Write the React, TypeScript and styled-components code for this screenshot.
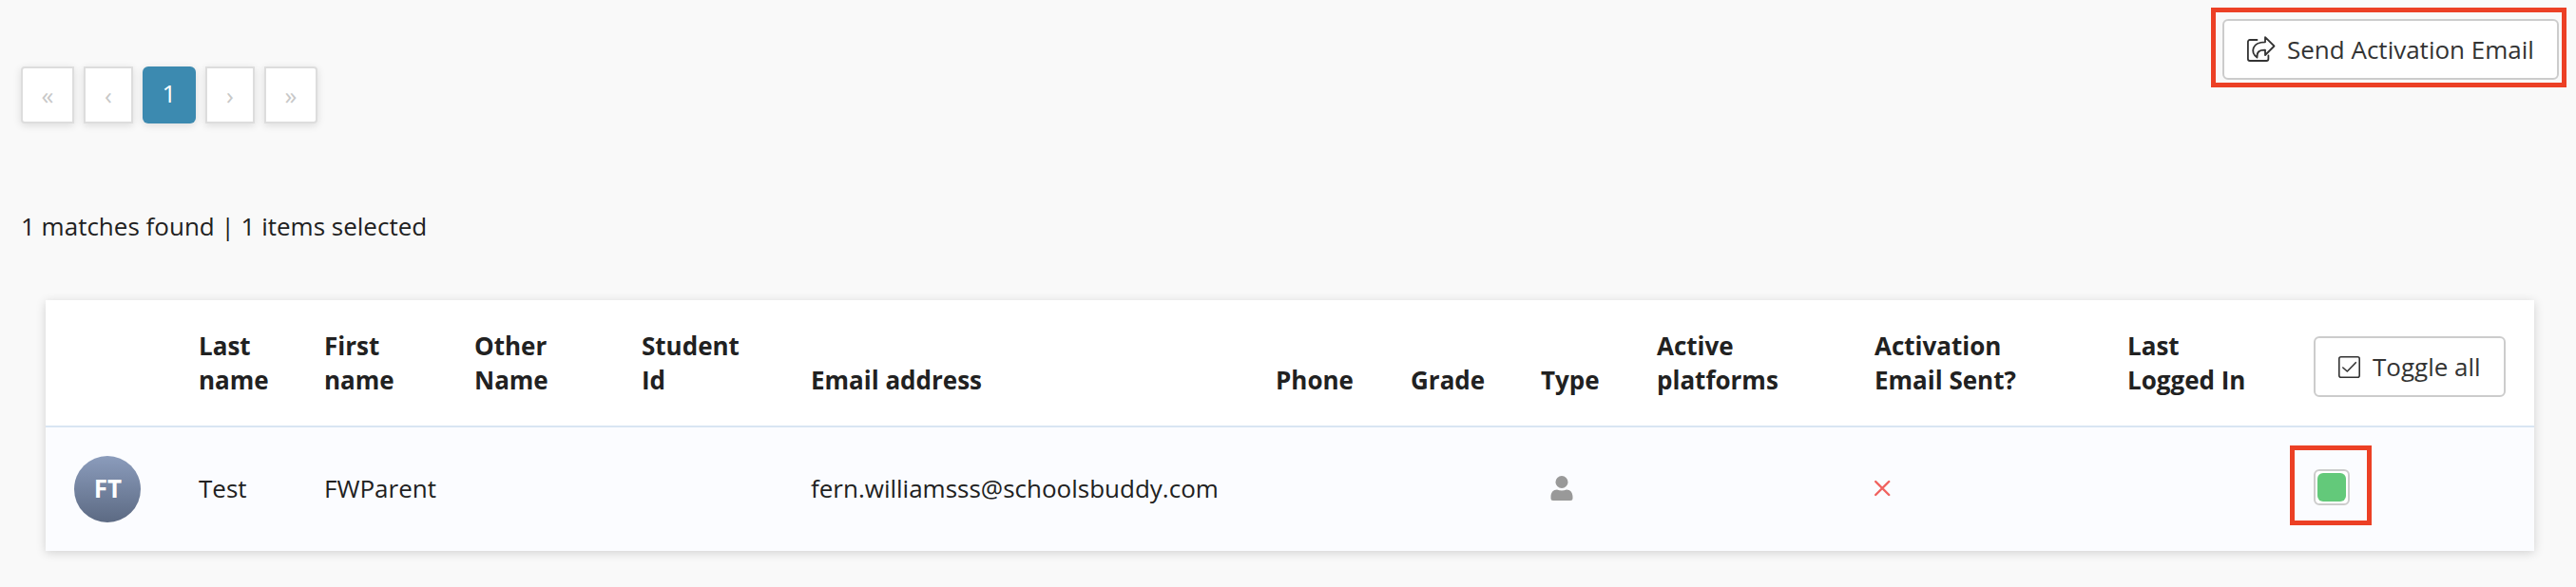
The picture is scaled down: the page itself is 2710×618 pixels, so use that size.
import { useState } from "react";
import styled, { createGlobalStyle } from "styled-components";

//estilos globais
const GlobalStyle = createGlobalStyle`
  * {
    margin: 0;
    padding: 0;
    box-sizing: border-box;
  }

  body {
    background: #f9f9f9;
    color: #212121;
    font-family: "Open Sans", sans-serif;
    font-size: 26px;
    line-height: 36px;
  }
`;

const Page = styled.main`
  width: 2710px;
  height: 618px;
  overflow: hidden;
  padding-top: 8px;
`;

const TopBar = styled.header`
  display: flex;
  justify-content: space-between;
  align-items: flex-start;
  padding: 0 10px 0 22px;
  height: 122px;
`;

const Pagination = styled.nav`
  display: flex;
  gap: 10px;
  margin-top: 62px;
`;

const PageButton = styled.button<{ $active?: boolean; $wide?: boolean; $radius?: string }>`
  width: ${(p) => (p.$wide ? 56 : 52)}px;
  height: 60px;
  padding-bottom: ${(p) => (p.$active ? 4 : 0)}px;
  border: ${(p) => (p.$active ? "none" : "2px solid #ddd")};
  border-radius: ${(p) => p.$radius ?? "0"};
  background: ${(p) => (p.$active ? "#3c8ab0" : "#fff")};
  color: ${(p) => (p.$active ? "#fff" : "#c8c8c8")};
  box-shadow: 0 2px 8px rgba(0, 0, 0, 0.12);
  font-family: inherit;
  font-size: 26px;
`;

//red frame around the parts the user has to look at
const Highlight = styled.div`
  display: inline-flex;
  border: 5px solid #ec4025;
`;

const SendFrame = styled(Highlight)`
  width: 374px;
  height: 84px;
  padding: 7px 3px 3px 7px;
`;

const CheckFrame = styled(Highlight)`
  width: 86px;
  height: 84px;
  padding: 20px;
  margin: -7px 0 -7px -25px;
  vertical-align: top;
`;

const Button = styled.button<{ $width: number; $gap: number }>`
  display: flex;
  align-items: center;
  gap: ${(p) => p.$gap}px;
  width: ${(p) => p.$width}px;
  height: 64px;
  padding: 0 0 0 24px;
  border: 2px solid #ccc;
  border-radius: 6px;
  background: #fff;
  color: #333;
  font-family: inherit;
  font-size: 26px;
  white-space: nowrap;
`;

const Matches = styled.p`
  margin-top: 90px;
  padding-left: 22px;
`;

const Table = styled.table`
  width: 2618px;
  margin: 60px 0 0 48px;
  border-collapse: separate;
  border-spacing: 0;
  table-layout: fixed;
  background: #fff;
  box-shadow: 0 2px 10px rgba(0, 0, 0, 0.16);
`;

const Th = styled.th`
  height: 134px;
  padding: 30px 0;
  border-bottom: 2px solid #d9e5f3;
  font-weight: 700;
  text-align: left;
  vertical-align: bottom;
  white-space: pre-line;
`;

const ToggleTh = styled(Th)`
  vertical-align: top;
  padding: 38px 0 0;
`;

const Td = styled.td<{ $bottom?: number }>`
  height: 130px;
  padding-bottom: ${(p) => p.$bottom ?? 2}px;
  background: #fbfcff;
  vertical-align: middle;

  svg {
    display: block;
  }
`;

const Avatar = styled.div`
  display: flex;
  align-items: center;
  justify-content: center;
  width: 70px;
  height: 70px;
  margin-left: 30px;
  padding: 0 0 2px 1px;
  border-radius: 50%;
  background: linear-gradient(#8b9cbc, #5c6a83);
  color: #fff;
  font-weight: 700;
`;

const CheckBox = styled.button`
  width: 38px;
  height: 38px;
  padding: 2px;
  flex-shrink: 0;
  border: 2px solid #ccc;
  border-radius: 6px;
  background: #fff;
`;

const CheckFill = styled.span<{ $on: boolean }>`
  display: block;
  width: 30px;
  height: 30px;
  border-radius: 6px;
  background: ${(p) => (p.$on ? "#63c97a" : "transparent")};
`;

const TypeIcon = styled.svg`
  margin-left: 10px;
`;

const ShareIcon = () => (
  <svg width="30" height="28" viewBox="0 0 30 28" fill="none" stroke="#333" strokeWidth="1.8" strokeLinejoin="round" strokeLinecap="round">
    <path d="M10.500 4H2.900A2 2 0 0 0 .9 6v18a2 2 0 0 0 2 2h17.500a2 2 0 0 0 2-2v-3.500" />
    <path d="M19 1.200L28.500 10.500 19 20V14.600C13 14.400 10 16.500 10.500 22.500 3.200 17 5 6.300 19 6.300Z" />
  </svg>
);

const CheckIcon = () => (
  <svg width="23" height="23" viewBox="0 0 23 23" fill="none" stroke="#333" strokeWidth="1.6" strokeLinecap="round" strokeLinejoin="round">
    <rect x=".8" y=".8" width="21.400" height="21.400" rx="2" />
    <path d="M4.800 12l4.500 4 9-9.300" />
  </svg>
);

const UserIcon = () => (
  <TypeIcon width="24" height="26" viewBox="0 0 24 26" fill="#999">
    <circle cx="12" cy="6.500" r="6.500" />
    <path d="M7 14.500c3.300 1.400 6.700 1.400 10 0 4 0 6.500 3 6.500 7.500v1.500c0 1.700-.8 2.500-2.500 2.500H3C1.300 26 .5 25.200.5 23.500V22c0-4.500 2.500-7.500 6.500-7.500z" />
  </TypeIcon>
);

const CrossIcon = () => (
  <svg width="17" height="18" viewBox="0 0 17 18" fill="none" stroke="#f0625f" strokeWidth="2.400" strokeLinecap="round">
    <path d="M1.200 2l14 14M15.200 2l-14 14" />
  </svg>
);

//table columns, width in px
const columns = [
  { title: "", width: 161 },
  { title: "Last\nname", width: 132 },
  { title: "First\nname", width: 158 },
  { title: "Other\nName", width: 176 },
  { title: "Student\nId", width: 178 },
  { title: "Email address", width: 489 },
  { title: "Phone", width: 142 },
  { title: "Grade", width: 137 },
  { title: "Type", width: 122 },
  { title: "Active\nplatforms", width: 229 },
  { title: "Activation\nEmail Sent?", width: 266 },
  { title: "Last\nLogged In", width: 196 },
];

const App = () => {
  const [selected, setSelected] = useState(true);
  const count = selected ? 1 : 0;

  return (
    <>
      <GlobalStyle />
      <Page>
        <TopBar>
          <Pagination>
            <PageButton $wide $radius="4px 0 0 4px">«</PageButton>
            <PageButton>‹</PageButton>
            <PageButton $wide $active $radius="6px">1</PageButton>
            <PageButton>›</PageButton>
            <PageButton $wide $radius="0 4px 4px 0">»</PageButton>
          </Pagination>
          <SendFrame>
            <Button $width={354} $gap={12}>
              <ShareIcon />
              Send Activation Email
            </Button>
          </SendFrame>
        </TopBar>

        <Matches>1 matches found | {count} items selected</Matches>

        <Table>
          <colgroup>
            {columns.map((column, i) => (
              <col key={i} width={column.width} />
            ))}
            <col />
          </colgroup>
          <thead>
            <tr>
              {columns.map((column, i) => (
                <Th key={i}>{column.title}</Th>
              ))}
              <ToggleTh>
                <Button $width={202} $gap={13} onClick={() => setSelected(!selected)}>
                  <CheckIcon />
                  Toggle all
                </Button>
              </ToggleTh>
            </tr>
          </thead>
          <tbody>
            <tr>
              <Td $bottom={0}>
                <Avatar>FT</Avatar>
              </Td>
              <Td>Test</Td>
              <Td>FWParent</Td>
              <Td />
              <Td />
              <Td>fern.williamsss@schoolsbuddy.com</Td>
              <Td />
              <Td />
              <Td>
                <UserIcon />
              </Td>
              <Td />
              <Td>
                <CrossIcon />
              </Td>
              <Td />
              <Td $bottom={8}>
                <CheckFrame>
                  <CheckBox onClick={() => setSelected(!selected)}>
                    <CheckFill $on={selected} />
                  </CheckBox>
                </CheckFrame>
              </Td>
            </tr>
          </tbody>
        </Table>
      </Page>
    </>
  );
};

export default App;
